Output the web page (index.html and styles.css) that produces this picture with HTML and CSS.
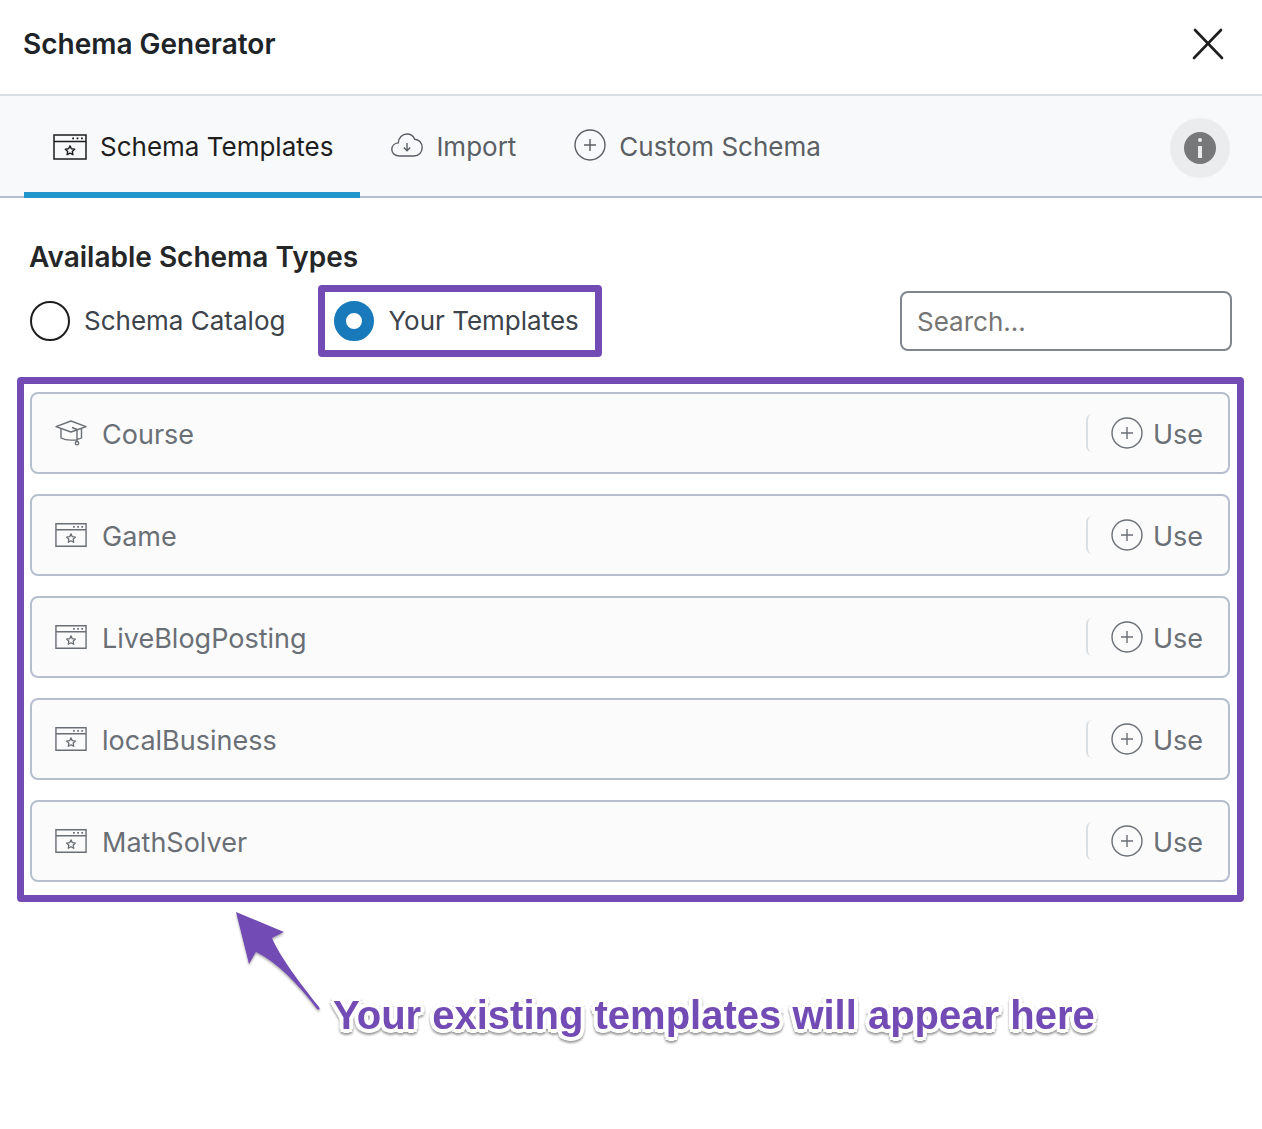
FILE: index.html
```html
<!DOCTYPE html>
<html lang="en">
<head>
    <meta charset="UTF-8">
    <meta name="viewport" content="width=device-width, initial-scale=1.0">
    <title>Schema Generator</title>
    <link rel="stylesheet" href="styles.css">
</head>
<body>
    <!-- Shared icons -->
    <svg class="sprite" aria-hidden="true">
        <symbol id="icon-window" viewBox="0 0 34 26">
            <path d="M1 1h32v24H1zM1 7.5h32" fill="none" stroke="currentColor" stroke-width="1.5"/>
            <path d="M19.2 3.4h1.800v1.800h-1.800zM23.600 3.400h1.800v1.800h-1.800zM28 3.400h1.800v1.800h-1.800z" fill="currentColor"/>
            <path d="M17 11.8l1.4 3 3.3.4-2.4 2.2.6 3.3-2.9-1.6-2.9 1.6.6-3.3-2.4-2.2 3.3-.4z" fill="none" stroke="currentColor" stroke-width="1.4" stroke-linejoin="round"/>
        </symbol>
        <symbol id="icon-plus" viewBox="0 0 32 32">
            <circle cx="16" cy="16" r="15" fill="none" stroke="currentColor" stroke-width="1.4"/>
            <path d="M16 10v12M10 16h12" fill="none" stroke="currentColor" stroke-width="1.4"/>
        </symbol>
        <symbol id="icon-cloud" viewBox="0 0 32 24">
            <path d="M8.500 23C4 23 .8 20.200 .8 16.500c0-3.500 2.700-6.200 6.500-6.600C7.500 4.700 11.300 1 16 1c3.600 0 6.500 2 7.700 5.300 4.300.3 7.500 3.700 7.500 8.100 0 4.900-3.500 8.600-8.200 8.600z" fill="none" stroke="currentColor" stroke-width="1.4"/>
            <path d="M16 10v7.500M12.800 14.500l3.200 3.200 3.200-3.200" fill="none" stroke="currentColor" stroke-width="1.4"/>
        </symbol>
        <symbol id="icon-cap" viewBox="0 0 32 26">
            <path d="M1 6.700L16 1l15 5.700-15 5.300zM6 8.600V18c5 2.800 15 2.800 20.500 0V8.600M17 7.500l5 2v12" fill="none" stroke="currentColor" stroke-width="1.4" stroke-linejoin="round"/>
            <circle cx="22" cy="23.200" r="1.700" fill="none" stroke="currentColor" stroke-width="1.400"/>
        </symbol>
    </svg>

    <header class="modal-header">
        <h1>Schema Generator</h1>
        <button class="close" type="button" aria-label="Close">
            <svg width="32" height="32" viewBox="0 0 32 32"><path d="M3 2l27 28M29 2L2 30" stroke="currentColor" stroke-width="2.600" stroke-linecap="round"/></svg>
        </button>
    </header>

    <nav class="tabs">
        <button class="tab active" type="button"><svg class="icon-lg"><use href="#icon-window"/></svg>Schema Templates</button>
        <button class="tab" type="button"><svg class="icon-cloud"><use href="#icon-cloud"/></svg>Import</button>
        <button class="tab" type="button"><svg class="icon-plus"><use href="#icon-plus"/></svg>Custom Schema</button>
        <button class="info" type="button" aria-label="Help">
            <svg width="32" height="32" viewBox="0 0 32 32"><circle cx="16" cy="16" r="16" fill="#777879"/><circle cx="16" cy="8" r="2" fill="#ebecee"/><path d="M14 14h4v12h-4z" fill="#ebecee"/></svg>
        </button>
    </nav>

    <main>
        <h2>Available Schema Types</h2>
        <div class="filters">
            <label class="choice"><input type="radio" name="source">Schema Catalog</label>
            <label class="choice marked"><input type="radio" name="source" checked>Your Templates</label>
            <input class="search" type="text" placeholder="Search..." aria-label="Search">
        </div>

        <ul class="templates">
            <li>
                <svg class="icon"><use href="#icon-cap"/></svg>
                <span class="name">Course</span>
                <button class="use" type="button"><svg class="icon-plus"><use href="#icon-plus"/></svg>Use</button>
            </li>
            <li>
                <svg class="icon"><use href="#icon-window"/></svg>
                <span class="name">Game</span>
                <button class="use" type="button"><svg class="icon-plus"><use href="#icon-plus"/></svg>Use</button>
            </li>
            <li>
                <svg class="icon"><use href="#icon-window"/></svg>
                <span class="name">LiveBlogPosting</span>
                <button class="use" type="button"><svg class="icon-plus"><use href="#icon-plus"/></svg>Use</button>
            </li>
            <li>
                <svg class="icon"><use href="#icon-window"/></svg>
                <span class="name">localBusiness</span>
                <button class="use" type="button"><svg class="icon-plus"><use href="#icon-plus"/></svg>Use</button>
            </li>
            <li>
                <svg class="icon"><use href="#icon-window"/></svg>
                <span class="name">MathSolver</span>
                <button class="use" type="button"><svg class="icon-plus"><use href="#icon-plus"/></svg>Use</button>
            </li>
        </ul>

        <div class="note">
            <svg class="arrow" width="86" height="100" viewBox="0 0 86 100"><path d="M0 0l48 20-12 6c8 19 28 45 47 69q2 4-2 2C62 72 42 51 20 40l-7 12z" fill="#734bb5"/></svg>
            <p>Your existing templates will appear here</p>
        </div>
    </main>
</body>
</html>
```
FILE: styles.css
```css
* {
    box-sizing: border-box;
}
body {
    margin: 0;
    font-family: Inter, "Liberation Sans", sans-serif;
    font-size: 26px;
    line-height: 32px;
    color: #3c434a;
    background: #fff;
}
button {
    padding: 0;
    border: none;
    background: none;
    font: inherit;
    color: inherit;
    cursor: pointer;
}
svg {
    display: block;
    flex-shrink: 0;
}
.sprite {
    position: absolute;
    width: 0;
    height: 0;
}
.icon {
    width: 32px;
    height: 26px;
}
.icon-lg {
    width: 34px;
    height: 26px;
}
.icon-cloud {
    width: 32px;
    height: 24px;
    margin-bottom: 4px;
}
.icon-plus {
    width: 32px;
    height: 32px;
    margin-bottom: 4px;
}

/* Header */
.modal-header {
    display: flex;
    align-items: center;
    justify-content: space-between;
    height: 96px;
    padding: 0 38px 6px 23px;
    border-bottom: 2px solid #dadfe4;
}
h1, h2 {
    margin: 0;
    font-size: 28px;
    font-weight: 600;
    line-height: 34px;
    color: #1d2327;
}
.close {
    color: #1e1e1e;
}

/* Tabs */
.tabs {
    display: flex;
    gap: 2px;
    height: 102px;
    padding: 0 32px 0 24px;
    background: #f8f9fb;
    border-bottom: 2px solid #b5bfcd;
}
.tab {
    display: flex;
    align-items: center;
    gap: 13px;
    margin-bottom: -2px;
    padding: 6px 27px 0 29px;
    border-bottom: 6px solid transparent;
    color: #5a5f64;
}
.tab.active {
    color: #1e1e1e;
    border-bottom-color: #2196cc;
}
.info {
    display: flex;
    align-items: center;
    justify-content: center;
    width: 60px;
    height: 60px;
    margin: 22px 0 0 auto;
    border-radius: 50%;
    background: #ebecee;
}

/* Filters */
main {
    padding: 42px 18px 0 17px;
}
h2 {
    margin-left: 12px;
    color: #242628;
}
.filters {
    display: flex;
    align-items: center;
    height: 72px;
    margin: 11px 12px 20px 13px;
}
.choice {
    display: flex;
    align-items: center;
    gap: 14px;
}
.choice input {
    appearance: none;
    width: 40px;
    height: 40px;
    margin: 0;
    border: 2px solid #1e1e1e;
    border-radius: 50%;
    background: #fff;
}
.choice input:checked {
    border: 12px solid #187aba;
}
.choice.marked {
    height: 72px;
    margin-left: 33px;
    padding: 0 16px 0 9px;
    border: 7px solid #734bb5;
    border-radius: 4px;
}
.search {
    width: 332px;
    height: 60px;
    margin-left: auto;
    padding: 0 15px;
    border: 2px solid #80868e;
    border-radius: 8px;
    font: inherit;
    color: #3c434a;
    background: #fff;
}
.search::placeholder {
    color: #757575;
    opacity: 1;
}

/* Template list */
.templates {
    display: flex;
    flex-direction: column;
    gap: 20px;
    margin: 0;
    padding: 8px 7px 13px 6px;
    border: 7px solid #734bb5;
    border-radius: 4px;
    list-style: none;
    font-size: 27px;
    color: #6a6f75;
}
.templates li {
    display: flex;
    align-items: center;
    gap: 15px;
    height: 82px;
    padding: 0 25px 0 23px;
    border: 2px solid #b5bfcd;
    border-radius: 8px;
    background: #fbfbfc;
}
.name {
    padding-top: 3px;
}
.use {
    display: flex;
    align-items: center;
    gap: 10px;
    height: 38px;
    margin-left: auto;
    padding: 3px 0 0 23px;
    border-left: 2px solid #dadfe4;
    border-radius: 6px;
}

/* Callout */
.note {
    display: flex;
    align-items: flex-end;
    margin: 10px 0 0 219px;
}
.arrow {
    margin-bottom: 35px;
    filter: drop-shadow(0 2px 1px rgba(0, 0, 0, 0.3));
}
.note p {
    margin: 0 0 0 11px;
    padding-bottom: 8px;
    font-family: "Liberation Sans", Arial, sans-serif;
    font-size: 40px;
    font-weight: bold;
    line-height: 48px;
    color: #734bb5;
    text-shadow: 4px 0 #fff, -4px 0 #fff, 0 4px #fff, 0 -4px #fff, 3px 3px #fff, -3px 3px #fff, 3px -3px #fff, -3px -3px #fff;
    filter: drop-shadow(0 2px 1px rgba(0, 0, 0, 0.4));
}
```
